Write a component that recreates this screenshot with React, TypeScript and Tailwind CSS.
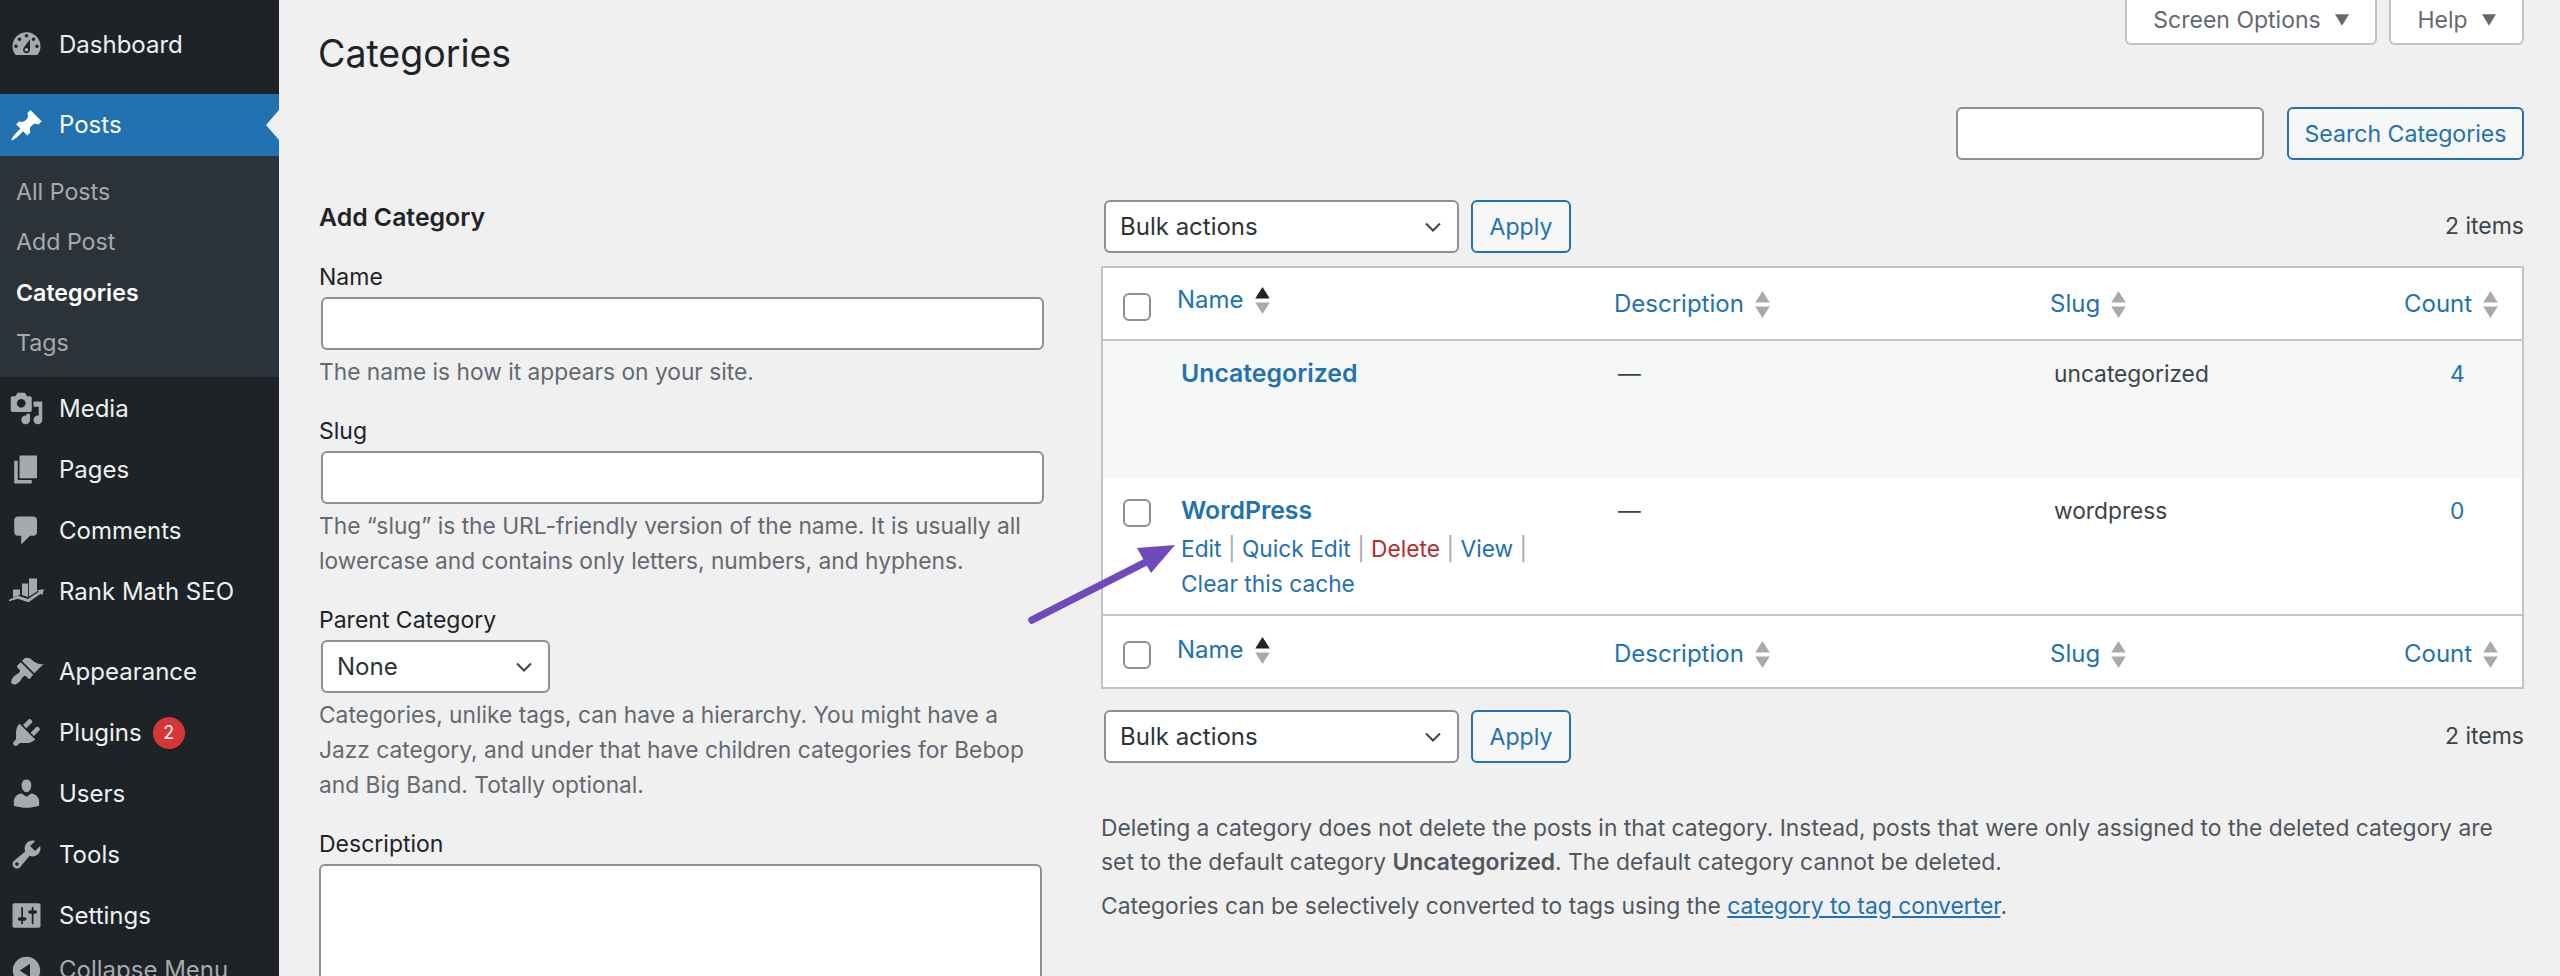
import type { ReactNode } from 'react';

const ICONS: Record<string, string> = {
  dashboard: 'M3.76 16h12.48c1.1-1.37 1.76-3.11 1.76-5 0-4.42-3.58-8-8-8s-8 3.58-8 8c0 1.89.66 3.63 1.76 5zM10 4c.55 0 1 .45 1 1s-.45 1-1 1-1-.45-1-1 .45-1 1-1zM6 6c.55 0 1 .45 1 1s-.45 1-1 1-1-.45-1-1 .45-1 1-1zm8 0c.55 0 1 .45 1 1s-.45 1-1 1-1-.45-1-1 .45-1 1-1zm-5.37 5.55L12 7v6c0 1.1-.9 2-2 2s-2-.9-2-2c0-.57.24-1.08.63-1.45zM4 10c.55 0 1 .45 1 1s-.45 1-1 1-1-.45-1-1 .45-1 1-1zm12 0c.55 0 1 .45 1 1s-.45 1-1 1-1-.45-1-1 .45-1 1-1zm-5 3c0-.55-.45-1-1-1s-1 .45-1 1 .45 1 1 1 1-.45 1-1z',
  posts: 'M10.44 3.02l1.82-1.82 6.36 6.35-1.83 1.82c-1.05-.68-2.48-.57-3.41.36l-.75.75c-.92.93-1.04 2.35-.35 3.41l-1.83 1.82-2.41-2.41-2.8 2.79c-.42.42-3.38 2.71-3.8 2.29s1.86-3.39 2.28-3.81l2.79-2.79L4.1 9.36l1.83-1.82c1.05.69 2.48.57 3.4-.36l.75-.75c.93-.92 1.05-2.35.36-3.41z',
  media: 'M13 11V4c0-.55-.45-1-1-1h-1.67L9 1H5L3.67 3H2c-.55 0-1 .45-1 1v7c0 .55.45 1 1 1h10c.55 0 1-.45 1-1zM7 4.5c1.38 0 2.5 1.12 2.5 2.5S8.38 9.5 7 9.5 4.5 8.38 4.5 7 5.62 4.5 7 4.5zM14 6h5v10.5c0 1.38-1.12 2.5-2.5 2.5S14 17.88 14 16.5s1.12-2.5 2.5-2.5c.17 0 .34.02.5.05V9h-3V6zm-4 8.05V13h2v3.5c0 1.38-1.12 2.5-2.5 2.5S7 17.88 7 16.5 8.12 14 9.5 14c.17 0 .34.02.5.05z',
  pages: 'M6 15V2h10v13H6zm-1 1h8v2H3V5h2v11z',
  comments: 'M5 2h9c1.1 0 2 .9 2 2v7c0 1.1-.9 2-2 2h-2l-5 5v-5H5c-1.1 0-2-.9-2-2V4c0-1.1.9-2 2-2z',
  appearance: 'M14.48 11.06L7.41 3.99l1.5-1.5c.5-.56 2.3-.47 3.51.32 1.21.8 1.43 1.28 2.91 2.1 1.18.64 2.45 1.26 4.45.85zm-.71.71L6.7 4.7 4.93 6.47c-.39.39-.39 1.02 0 1.41l1.06 1.06c.39.39.39 1.03 0 1.42-.6.6-1.43 1.11-2.21 1.69-.35.26-.7.53-1.01.84-1.34 1.34-1.99 3.21-1.06 4.14.93.92 2.79.27 4.13-1.06.31-.31.58-.66.84-1.01.58-.79 1.09-1.61 1.69-2.21.39-.39 1.02-.39 1.41 0l1.06 1.06c.39.39 1.03.39 1.42 0z',
  plugins: 'M13.11 4.36L9.87 7.6 8 5.73l3.24-3.24c.35-.34 1.05-.2 1.56.32.52.51.66 1.21.31 1.55zm-8 1.77l.91-1.12 9.01 9.01-1.19.84c-.71.71-2.63 1.16-3.82 1.16H6.14L4.9 17.26c-.59.59-1.54.59-2.12 0-.59-.58-.59-1.53 0-2.12l1.24-1.24v-3.88c0-1.13.4-3.19 1.09-3.89zm7.26 3.97l3.24-3.24c.34-.35 1.04-.21 1.55.31.52.51.66 1.21.31 1.55l-3.24 3.25z',
  users: 'M10 9.25c-2.27 0-2.73-3.44-2.73-3.44C7 4.02 7.82 2 9.97 2c2.16 0 2.98 2.02 2.71 3.81 0 0-.41 3.44-2.68 3.44zm0 2.57L12.72 10c2.39 0 4.52 2.33 4.52 4.53v2.49s-3.65 1.13-7.24 1.13c-3.65 0-7.24-1.13-7.24-1.13v-2.49c0-2.25 1.94-4.48 4.47-4.48z',
  tools: 'M16.68 9.77c-1.34 1.34-3.3 1.67-4.95.99l-5.41 6.52c-.99.99-2.59.99-3.58 0s-.99-2.59 0-3.57l6.52-5.42c-.68-1.65-.35-3.61.99-4.95 1.28-1.28 3.12-1.62 4.72-1.06l-2.89 2.89 2.82 2.82 2.86-2.87c.53 1.58.18 3.39-1.08 4.67zM3.81 16.21c.4.39 1.04.39 1.43 0 .4-.4.4-1.04 0-1.43-.39-.4-1.03-.4-1.43 0-.39.39-.39 1.03 0 1.43z',
  settings: 'M18 16V4c0-.55-.45-1-1-1H3c-.55 0-1 .45-1 1v12c0 .55.45 1 1 1h14c.55 0 1-.45 1-1zM8 11h1c.55 0 1 .45 1 1s-.45 1-1 1H8v1.5c0 .28-.22.5-.5.5s-.5-.22-.5-.5V13H6c-.55 0-1-.45-1-1s.45-1 1-1h1V5.5c0-.28.22-.5.5-.5s.5.22.5.5V11zm5-2h-1c-.55 0-1-.45-1-1s.45-1 1-1h1V5.5c0-.28.22-.5.5-.5s.5.22.5.5V7h1c.55 0 1 .45 1 1s-.45 1-1 1h-1v5.5c0 .28-.22.5-.5.5s-.5-.22-.5-.5V9z',
  collapse: 'M10 2.16c4.33 0 7.84 3.51 7.84 7.84s-3.51 7.84-7.84 7.84S2.16 14.33 2.16 10 5.71 2.16 10 2.16zm2 11.72V6.12L6.18 9.97z',
  rankmath: 'M2.3 8.9h4v3l-4 1.5zM7.4 5.4h3.5v7.8l-3.5-1.2zM11.4 2.6H16V10l-4.6 3zM0 14.7l5.1-2.3 5.8 1.9 6.1-4.1-1-.9 4-.6-1 3.6-.9-1-7 4.8-6-2L0 15.6z',
};

function DashIcon({ name, active }: { name: string; active?: boolean }) {
  return (
    <svg viewBox="0 0 20 20" className={`w-[35px] h-[35px] shrink-0 ${active ? 'fill-white' : 'fill-[#a7aaad]'}`}>
      <path d={ICONS[name]} />
    </svg>
  );
}

function MenuItem({ icon, label, badge, className = 'h-[61px] pt-[2px]' }: { icon: string; label: string; badge?: string; className?: string }) {
  return (
    <div className={`flex items-center shrink-0 pl-[9px] text-[24px] text-[#f0f0f1] ${className}`}>
      <DashIcon name={icon} />
      <span className="ml-[15px]">{label}</span>
      {badge && (
        <span className="ml-[11px] w-[32px] h-[32px] rounded-full bg-[#d63638] text-white text-[18px] flex items-center justify-center">
          {badge}
        </span>
      )}
    </div>
  );
}

function Sidebar() {
  return (
    <aside className="w-[279px] shrink-0 bg-[#1d2327] h-[976px] overflow-hidden flex flex-col">
      <div className="shrink-0 h-[94px] pt-[14px]">
        <MenuItem icon="dashboard" label="Dashboard" className="h-[61px]" />
      </div>
      <div className="relative shrink-0 h-[62px] bg-[#2271b1] flex items-center pl-[9px] text-[24px] text-white">
        <DashIcon name="posts" active />
        <span className="ml-[15px]">Posts</span>
        <div className="absolute right-0 top-[16px] w-0 h-0 border-y-[15px] border-y-transparent border-r-[13px] border-r-[#f0f0f1]" />
      </div>
      <div className="shrink-0 h-[221px] bg-[#2c3338] pt-[11px] pl-[16px] text-[23.2px] text-[#a7aaad]">
        <div className="h-[50px] flex items-center">All Posts</div>
        <div className="h-[51px] flex items-center">Add Post</div>
        <div className="h-[50px] flex items-center font-semibold text-white">Categories</div>
        <div className="h-[51px] flex items-center">Tags</div>
      </div>
      <MenuItem icon="media" label="Media" />
      <MenuItem icon="pages" label="Pages" />
      <MenuItem icon="comments" label="Comments" />
      <MenuItem icon="rankmath" label="Rank Math SEO" />
      <div className="h-[19px] shrink-0" />
      <MenuItem icon="appearance" label="Appearance" />
      <MenuItem icon="plugins" label="Plugins" badge="2" />
      <MenuItem icon="users" label="Users" />
      <MenuItem icon="tools" label="Tools" />
      <MenuItem icon="settings" label="Settings" />
      <div className="flex items-center shrink-0 h-[50px] pl-[9px] text-[24px] text-[#a7aaad]">
        <DashIcon name="collapse" />
        <span className="ml-[15px]">Collapse Menu</span>
      </div>
    </aside>
  );
}

function Chevron() {
  return (
    <svg viewBox="0 0 20 20" className="w-[20px] h-[20px] shrink-0 fill-none stroke-[#3c434a] stroke-2">
      <path d="M3 6.5l7 7 7-7" />
    </svg>
  );
}

function SelectBox({ label, className }: { label: string; className: string }) {
  return (
    <div className={`flex items-center justify-between h-[53px] bg-white border-2 border-[#8c8f94] rounded-[6px] pl-[14px] pr-[14px] text-[24px] text-[#2c3338] ${className}`}>
      <span>{label}</span>
      <Chevron />
    </div>
  );
}

function BlueButton({ label, className }: { label: string; className: string }) {
  return (
    <button className={`h-[53px] pt-[1px] flex items-center justify-center bg-[#f6f7f7] border-2 border-[#2271b1] rounded-[6px] text-[23.1px] text-[#2271b1] ${className}`}>
      {label}
    </button>
  );
}

function Caret() {
  return (
    <svg viewBox="0 0 12 10" className="w-[14px] h-[12px] fill-[#646970] shrink-0">
      <path d="M0 0h12L6 10z" />
    </svg>
  );
}

function SortArrows({ active }: { active?: boolean }) {
  return (
    <svg viewBox="0 0 14 26" className="w-[15px] h-[27px] shrink-0">
      <path d="M7 0l7 11H0z" className={active ? 'fill-[#1d2327]' : 'fill-[#a7aaad]'} />
      <path d="M7 26L0 15h14z" className="fill-[#a7aaad]" />
    </svg>
  );
}

function Checkbox() {
  return <div className="w-[28px] h-[28px] bg-white border-2 border-[#8c8f94] rounded-[6px]" />;
}

function SortLink({ label, active }: { label: string; active?: boolean }) {
  return (
    <span className="flex items-center gap-[11px] text-[24px] text-[#2271b1]">
      {label}
      <SortArrows active={active} />
    </span>
  );
}

function HeaderRow({ className, nameTop, restTop }: { className: string; nameTop: string; restTop: string }) {
  return (
    <div className={`grid grid-cols-[74px_437px_436px_354px_1fr] bg-white ${className}`}>
      <div className="pl-[20px] pt-[25px]">
        <Checkbox />
      </div>
      <div className={`flex items-start ${nameTop}`}>
        <SortLink label="Name" active />
      </div>
      <div className={`flex items-start ${restTop}`}>
        <SortLink label="Description" />
      </div>
      <div className={`flex items-start ${restTop}`}>
        <SortLink label="Slug" />
      </div>
      <div className={`flex items-start ${restTop}`}>
        <SortLink label="Count" />
      </div>
    </div>
  );
}

function DataRow({ name, slug, count, checkbox, actions, className }: { name: string; slug: string; count: string; checkbox?: boolean; actions?: ReactNode; className: string }) {
  return (
    <div className={`grid grid-cols-[78px_437px_436px_354px_1fr] pt-[15px] text-[22.75px] leading-[35px] text-[#3c434a] ${className}`}>
      <div className="pl-[20px] pt-[6px]">{checkbox && <Checkbox />}</div>
      <div>
        <div className="font-semibold text-[24.8px] text-[#2271b1]">{name}</div>
        {actions}
      </div>
      <div>—</div>
      <div>{slug}</div>
      <div className="pl-[42px] text-[#2271b1]">{count}</div>
    </div>
  );
}

function Field({ label, children, className }: { label: string; children: ReactNode; className: string }) {
  return (
    <div className={className}>
      <div className="text-[23px] leading-[34px] text-[#1d2327] mb-[3px]">{label}</div>
      {children}
    </div>
  );
}

function Help({ children }: { children: ReactNode }) {
  return <p className="mt-[4px] text-[22.75px] leading-[35px] text-[#646970]">{children}</p>;
}

function TextBox() {
  return <div className="ml-[2px] w-[723px] h-[53px] bg-white border-2 border-[#8c8f94] rounded-[6px]" />;
}

function BulkRow({ className }: { className: string }) {
  return (
    <div className={`flex items-center ${className}`}>
      <SelectBox label="Bulk actions" className="ml-[3px] w-[355px]" />
      <BlueButton label="Apply" className="ml-[12px] w-[100px]" />
      <span className="ml-auto text-[23px] text-[#3c434a]">2 items</span>
    </div>
  );
}

export default function App() {
  return (
    <div className="relative flex w-[2560px] h-[976px] overflow-hidden bg-[#f0f0f1] font-['Inter',sans-serif]">
      <Sidebar />
      <main className="flex-1 min-w-0 pl-[40px] pr-[36px]">
        {/* Title and screen meta */}
        <div className="flex justify-between items-start h-[107px]">
          <h1 className="-ml-[1px] mt-[30px] text-[37.5px] leading-[48px] text-[#1d2327]">Categories</h1>
          <div className="flex gap-[12px]">
            <div className="w-[252px] h-[45px] pb-[3px] flex items-center justify-center gap-[14px] bg-white border-2 border-t-0 border-[#c3c4c7] rounded-b-[6px] text-[23px] text-[#646970]">
              Screen Options <Caret />
            </div>
            <div className="w-[135px] h-[45px] pb-[3px] flex items-center justify-center gap-[14px] bg-white border-2 border-t-0 border-[#c3c4c7] rounded-b-[6px] text-[23px] text-[#646970]">
              Help <Caret />
            </div>
          </div>
        </div>

        <div className="flex items-start">
          {/* Add form */}
          <div className="w-[782px] shrink-0">
            <h2 className="mt-[93px] text-[24.8px] leading-[35px] font-semibold text-[#1d2327]">Add Category</h2>
            <Field label="Name" className="mt-[25px]">
              <TextBox />
              <Help>The name is how it appears on your site.</Help>
            </Field>
            <Field label="Slug" className="mt-[25px]">
              <TextBox />
              <Help>
                The “slug” is the URL-friendly version of the name. It is usually all
                <br />
                lowercase and contains only letters, numbers, and hyphens.
              </Help>
            </Field>
            <Field label="Parent Category" className="mt-[25px]">
              <SelectBox label="None" className="ml-[2px] w-[229px]" />
              <Help>
                Categories, unlike tags, can have a hierarchy. You might have a
                <br />
                Jazz category, and under that have children categories for Bebop
                <br />
                and Big Band. Totally optional.
              </Help>
            </Field>
            <Field label="Description" className="mt-[25px]">
              <div className="w-[723px] h-[200px] bg-white border-2 border-[#8c8f94] rounded-[6px]" />
            </Field>
          </div>

          {/* Table column */}
          <div className="flex-1 min-w-0">
            <div className="flex justify-end">
              <div className="w-[308px] h-[53px] bg-white border-2 border-[#8c8f94] rounded-[6px]" />
              <BlueButton label="Search Categories" className="ml-[23px] w-[237px]" />
            </div>
            <BulkRow className="mt-[40px]" />
            <div className="mt-[13px] border-2 border-[#c3c4c7]">
              <HeaderRow className="h-[73px] border-b-2 border-[#c3c4c7]" nameTop="pt-[14px]" restTop="pt-[18px]" />
              <DataRow name="Uncategorized" slug="uncategorized" count="4" className="h-[137px] bg-[#f6f7f7]" />
              <DataRow
                name="WordPress"
                slug="wordpress"
                count="0"
                checkbox
                className="h-[138px] bg-white border-b-2 border-[#c3c4c7]"
                actions={
                  <div className="mt-[3px] text-[22.75px] text-[#a7aaad]">
                    <span className="text-[#2271b1]">Edit</span> | <span className="text-[#2271b1]">Quick Edit</span> |{' '}
                    <span className="text-[#b32d2e]">Delete</span> | <span className="text-[#2271b1]">View</span> |
                    <br />
                    <span className="text-[#2271b1]">Clear this cache</span>
                  </div>
                }
              />
              <HeaderRow className="h-[71px]" nameTop="pt-[16px]" restTop="pt-[20px]" />
            </div>
            <BulkRow className="mt-[21px]" />
            <div className="mt-[48px] text-[22.85px] leading-[34px] text-[#50575e]">
              <p>
                Deleting a category does not delete the posts in that category. Instead, posts that were only assigned to the deleted category are
                <br />
                set to the default category <strong className="font-semibold">Uncategorized</strong>. The default category cannot be deleted.
              </p>
              <p className="mt-[10px]">
                Categories can be selectively converted to tags using the{' '}
                <span className="text-[#2271b1] underline">category to tag converter</span>.
              </p>
            </div>
          </div>
        </div>
      </main>

      {/* Annotation arrow */}
      <svg className="absolute left-[1020px] top-[535px] w-[165px] h-[95px]" viewBox="0 0 165 95">
        <line x1="12" y1="85" x2="126" y2="27" className="stroke-[#7049ba] stroke-[7.5]" strokeLinecap="round" />
        <path d="M155 10L117 13L131 38z" className="fill-[#7049ba]" />
      </svg>
    </div>
  );
}
